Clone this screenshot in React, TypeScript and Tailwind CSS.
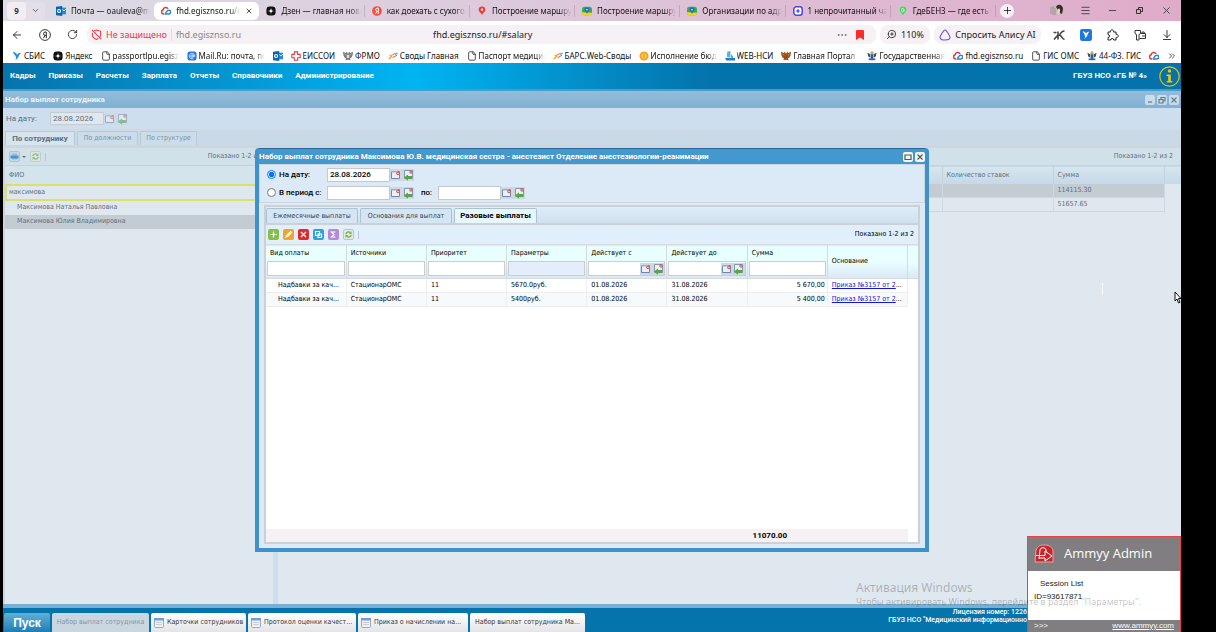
import React from 'react';
import clsx from 'clsx';
import {
  ArrowDownToLine,
  ArrowLeft,
  ChevronDown,
  ChevronsRight,
  File,
  Menu,
  Minus,
  MoreHorizontal,
  Plus,
  RotateCw,
  X,
  ZoomIn,
} from 'lucide-react';

type IconName =
  | 'outlook' | 'cloud' | 'dzen' | 'yandex' | 'pin' | 'maps' | 'chat' | 'gas'
  | 'sbis' | 'file' | 'mail' | 'cross' | 'eagle' | 'bars' | 'coin' | 'boat' | 'gerb' | 'nso';

const SiteIcon: React.FC<{ name: IconName }> = ({ name }) => {
  if (name === 'file') return <File size={10} strokeWidth={2} className="shrink-0 text-[#333]" />;
  return (
    <svg width="10" height="10" viewBox="0 0 12 12" className="shrink-0" fill="none">
      {name === 'outlook' && (
        <>
          <path d="M6 2h6v8H6z" fill="#2a8ad4" />
          <path d="M7 3.5 9.5 6 12 3.5" stroke="#fff" />
          <path d="M0 1 7.500 0v12L0 11z" fill="#0a64b4" />
          <circle cx="3.700" cy="6" r="1.800" stroke="#fff" strokeWidth="1.300" />
        </>
      )}
      {name === 'cloud' && (
        <>
          <path d="M4 9.500H3A2.500 2.500 0 0 1 2.500 4.600 3.200 3.200 0 0 1 8.500 3.500" stroke="#e23a3f" strokeWidth="1.800" />
          <path d="M4.500 9.500h5a2.200 2.200 0 0 0 0-4.400C8 5 7 6 5.500 8.500" stroke="#2b86cf" strokeWidth="1.800" />
        </>
      )}
      {name === 'dzen' && (
        <>
          <rect x="0.500" y="0.500" width="11" height="11" rx="4" fill="#111" />
          <path d="M6 2c.3 3 1 3.700 4 4-3 .3-3.700 1-4 4-.3-3-1-3.700-4-4 3-.3 3.700-1 4-4z" fill="#fff" />
        </>
      )}
      {name === 'yandex' && (
        <>
          <circle cx="6" cy="6" r="5.800" fill="#fc4a35" />
          <path d="M7.500 9.500v-7H6.300a1.900 1.900 0 0 0 0 3.900h1.200M6 6.400 4.200 9.500" stroke="#fff" strokeWidth="1.200" />
        </>
      )}
      {name === 'pin' && (
        <>
          <path d="M6 .5a4 4 0 0 1 4 4C10 7.500 6.500 8 6 11.500 5.500 8 2 7.500 2 4.500a4 4 0 0 1 4-4z" fill="#f43b2d" />
          <circle cx="6" cy="4.500" r="1.400" fill="#fff" />
        </>
      )}
      {name === 'maps' && (
        <>
          <rect y="1" width="12" height="10" rx="3" fill="#2fb344" />
          <path d="M0 7.500 12 8v1a2.500 2.500 0 0 1-2.500 2H3a3 3 0 0 1-3-2z" fill="#ffd21e" />
          <path d="M6 1.500a3 3 0 0 1 3 3C9 6.800 6.400 7 6 9.500 5.600 7 3 6.800 3 4.500a3 3 0 0 1 3-3z" fill="#2368d8" />
          <circle cx="6" cy="4.500" r="1" fill="#fff" />
        </>
      )}
      {name === 'chat' && (
        <>
          <rect x="1" y="1" width="10" height="10" rx="3" stroke="#5a3df0" strokeWidth="1.800" fill="#fff" />
          <circle cx="6" cy="6" r="2" fill="#2a6cf5" />
        </>
      )}
      {name === 'gas' && (
        <>
          <path d="M6 .5a4 4 0 0 1 4 4C10 7.500 7 8 6 11.500 5 8 2 7.500 2 4.500a4 4 0 0 1 4-4z" fill="#3ddc5b" />
          <path d="M4.500 3h2v4h-2zM7.500 4v2.500" stroke="#b8f5c3" />
        </>
      )}
      {name === 'sbis' && <path d="M1 1c2.500.3 4 1.500 5 3.500C7 3 8.500 2 11 2 9 4 8 5 7.500 7.500L4 11.500c1-2.500 1-3.500.5-5C4 5 2 4 1 1z" fill="#1d8fe8" />}
      {name === 'mail' && (
        <>
          <rect x="0.500" y="0.500" width="11" height="11" rx="3" fill="#2477f2" />
          <circle cx="6" cy="6" r="1.500" stroke="#fff" />
          <path d="M7.500 4.500v2c0 1.200 1.800 1 1.800-.5A3.300 3.300 0 1 0 7.500 9" stroke="#fff" strokeWidth="0.900" />
        </>
      )}
      {name === 'cross' && <path d="M4 1h4v3h3v4H8v3H4V8H1V4h3z" stroke="#e23a45" strokeWidth="1.300" fill="#fff" />}
      {(name === 'eagle' || name === 'gerb') && (
        <>
          <path d="M6 3.500 4.500 .5 3.500 2.500 0 1l.5 4 1.500 3 1.500.500L3 11l3-.5 3 .5-.5-2.500L10 8l1.500-3L12 1 8.500 2.500 7.500.5z" fill={name === 'gerb' ? '#8a5a16' : '#777'} />
          <path d="M4.500 4.500h3v3L6 9 4.500 7.500z" fill={name === 'gerb' ? '#d12a2a' : '#ddd'} />
          <path d="M1.500 3 4 5.500M10.500 3 8 5.500" stroke={name === 'gerb' ? '#e0b040' : '#ccc'} strokeWidth="0.900" />
        </>
      )}
      {name === 'bars' && (
        <>
          <path d="M1 9.500 5 6M2 6l2.500-1.500" stroke="#f0a020" strokeWidth="1.500" />
          <path d="M5 5l3-2M5.500 8 11 5" stroke="#e8602c" strokeWidth="1.200" />
          <path d="M8 4l3.500-1.500" stroke="#4aa3df" strokeWidth="1.500" />
        </>
      )}
      {name === 'coin' && (
        <>
          <circle cx="6" cy="6" r="5.500" fill="#f7a51c" />
          <circle cx="6" cy="6" r="3" fill="#ffd75e" />
          <path d="M6 4v4" stroke="#d98207" strokeWidth="1.300" />
        </>
      )}
      {name === 'boat' && (
        <>
          <path d="M2.500 1 6.500 0v7.500h-4z" fill="#4ab5f0" />
          <path d="M7.500 3.500 10 8H7.500z" fill="#1b7fd0" />
          <path d="M0 8.500h12v3H1.500z" fill="#1b7fd0" />
        </>
      )}
      {name === 'nso' && (
        <>
          <path d="M.5 2 4 4v4L1.500 6.500zM11.500 2 8 4v4l2.500-1.500z" fill="#3c4f6c" />
          <path d="M4.500 2h3v7L6 11.500 4.500 9z" fill="#2763b0" />
          <path d="M4.500.5h3V4h-3z" fill="#d8a83c" />
          <path d="M2 9h8v2H2z" fill="#3c5f9c" />
        </>
      )}
    </svg>
  );
};

const tabs: { icon: IconName; title: string; active?: boolean }[] = [
  { icon: 'outlook', title: 'Почта — oauleva@mail' },
  { icon: 'cloud', title: 'fhd.egisznso.ru/#salary', active: true },
  { icon: 'dzen', title: 'Дзен — главная новости' },
  { icon: 'yandex', title: 'как доехать с сухого лога' },
  { icon: 'pin', title: 'Построение маршрута' },
  { icon: 'maps', title: 'Построение маршрута' },
  { icon: 'maps', title: 'Организации по адресу' },
  { icon: 'chat', title: '1 непрочитанный чат' },
  { icon: 'gas', title: 'ГдеБЕНЗ — где есть бензин' },
];

const bookmarks: { icon: IconName; title: string }[] = [
  { icon: 'sbis', title: 'СБИС' },
  { icon: 'dzen', title: 'Яндекс' },
  { icon: 'file', title: 'passportlpu.egisznso.ru' },
  { icon: 'mail', title: 'Mail.Ru: почта, поиск' },
  { icon: 'outlook', title: '' },
  { icon: 'cross', title: 'ЕИССОИ' },
  { icon: 'eagle', title: 'ФРМО' },
  { icon: 'bars', title: 'Своды Главная' },
  { icon: 'file', title: 'Паспорт медицинской' },
  { icon: 'bars', title: 'БАРС.Web-Своды' },
  { icon: 'coin', title: 'Исполнение бюджета' },
  { icon: 'boat', title: 'WEB-НСИ' },
  { icon: 'gerb', title: 'Главная Портал Закупок' },
  { icon: 'nso', title: 'Государственная инф' },
  { icon: 'cloud', title: 'fhd.egisznso.ru' },
  { icon: 'file', title: 'ГИС ОМС' },
  { icon: 'nso', title: '44-ФЗ. ГИС' },
  { icon: 'cloud', title: '' },
];

const menu = ['Кадры', 'Приказы', 'Расчеты', 'Зарплата', 'Отчеты', 'Справочники', 'Администрирование'];

const fade = '[mask-image:linear-gradient(to_right,#000_85%,transparent)]';
const small = "font-['DejaVu_Sans_Condensed','DejaVu_Sans',sans-serif] text-[7px]";

const TabBar: React.FC = () => (
  <div className="flex h-[21px] items-center bg-linear-to-r from-[#dcdde5] via-[#ddc6da] to-[#dfabc9] pl-1">
    <div className="flex h-[18px] w-[38px] shrink-0 items-center rounded bg-[#e4dee8]">
      <button className="h-full w-[19px] rounded bg-[#f1edf3] text-[8px] font-bold text-[#333]">9</button>
      <button aria-label="Список вкладок" className="flex w-[19px] justify-center">
        <ChevronDown size={9} strokeWidth={1.5} />
      </button>
    </div>
    <div className="ml-1 flex h-full min-w-0 flex-1 items-center">
      {tabs.map((tab, i) => (
        <a
          key={i}
          href="#salary"
          className={clsx(
            'flex h-[18px] min-w-0 flex-1 items-center gap-[5px] pr-1 pl-[7px]',
            tab.active ? 'rounded-md bg-white' : i > 1 && 'bg-[linear-gradient(#0002,#0002)] bg-[length:1px_12px] bg-right bg-no-repeat'
          )}
        >
          <SiteIcon name={tab.icon} />
          <span className={clsx('min-w-0 flex-1 overflow-hidden text-[8px] whitespace-nowrap text-[#111]', fade)}>{tab.title}</span>
          {tab.active && <X size={8} strokeWidth={2} className="mr-0.5 shrink-0" />}
        </a>
      ))}
    </div>
    <button aria-label="Новая вкладка" className="ml-1 flex size-[14px] shrink-0 items-center justify-center rounded-full bg-[#f8f0f6]">
      <Plus size={11} strokeWidth={1.5} />
    </button>
    <div className="flex shrink-0 items-center justify-between pr-[9px] pl-9">
      <svg width="14" height="13" viewBox="0 0 14 13" className="mr-4">
        <circle cx="8" cy="6" r="6" fill="#c9b9b7" />
        <path d="M6 3c2-4 7-2 7 2l-1 5-2-1z" fill="#3a2c2c" />
        <path d="M8 5c2-1 2 0 2 2l-1 4-2-2z" fill="#ead2c8" />
        <path d="M1 3v7M3 2v9M5 4v7" stroke="#8a7d80" strokeWidth="0.7" />
      </svg>
      <div className="flex gap-4 text-[#333]">
        <button aria-label="Меню"><Menu size={11} strokeWidth={1.8} /></button>
        <button aria-label="Свернуть"><Minus size={11} strokeWidth={1.8} /></button>
        <button aria-label="Восстановить">
          <svg width="11" height="11" viewBox="0 0 11 11" fill="none" stroke="currentColor">
            <path d="M2.500 4.500h4v4h-4zM4.500 4.500v-2h4v4h-2" />
          </svg>
        </button>
        <button aria-label="Закрыть"><X size={11} strokeWidth={1.8} /></button>
      </div>
    </div>
  </div>
);

const AddressBar: React.FC = () => (
  <div className="flex h-[27px] items-center bg-white pr-2 pl-2 text-[9px] text-[#222]">
    <button aria-label="Назад" className="w-7"><ArrowLeft size={12} strokeWidth={1.8} /></button>
    <button aria-label="Яндекс" className="w-7">
      <svg width="12" height="12" viewBox="0 0 12 12" fill="none" stroke="#222">
        <circle cx="6" cy="6" r="5.400" strokeWidth="0.900" />
        <path d="M7.300 9.200V3H6.200a1.700 1.700 0 0 0 0 3.400h1.100M6 6.400 4.400 9.200" />
      </svg>
    </button>
    <button aria-label="Обновить" className="w-5"><RotateCw size={11} strokeWidth={1.8} /></button>
    <div className="flex h-[19px] flex-1 items-center rounded-lg bg-[#f5f1f5] pr-1 pl-1">
      <svg width="11" height="11" viewBox="0 0 12 12" fill="none" stroke="#f5343c" strokeWidth="1.1">
        <path d="M3.500 2 6 1l4.500 1.500v4c0 1-.4 1.800-1 2.500M8 10.200c-.6.500-1.300.9-2 1.300-2.500-1.200-4.500-2.700-4.500-5V4M1 1l10 10" />
      </svg>
      <span className="ml-1 text-[#f5343c]">Не защищено</span>
      <span className="mx-1 h-3 w-px bg-[#ddd]" />
      <span className="text-[#888]">fhd.egisznso.ru</span>
      <span className="flex-1 pl-48">fhd.egisznso.ru/#salary</span>
      <MoreHorizontal size={12} className="text-[#777]" />
      <svg width="8" height="10" viewBox="0 0 8 10" className="mx-2">
        <path d="M0 1a1 1 0 0 1 1-1h6a1 1 0 0 1 1 1v9L4 7.500 0 10z" fill="#ff2a2a" />
      </svg>
    </div>
    <button className="ml-1 flex h-[19px] w-[50px] items-center justify-center gap-1 rounded-lg bg-[#f5f1f5]">
      <ZoomIn size={11} strokeWidth={1.800} className="-scale-x-100" />
      110%
    </button>
    <button className="ml-1 flex h-[19px] w-[107px] items-center justify-center gap-1 rounded-lg bg-[#f5f1f5]">
      <svg width="12" height="12" viewBox="0 0 12 12" fill="none">
        <path d="M6 1c1.500 0 5 6 5 7.500C11 10.300 8.500 11 6 11S1 10.300 1 8.500C1 7 4.500 1 6 1z" stroke="#6a4df0" strokeWidth="1.1" />
      </svg>
      Спросить Алису AI
    </button>
    <div className="ml-3 flex items-center gap-[15px]">
      <svg width="12" height="12" viewBox="0 0 12 12" fill="none" stroke="#444" strokeWidth="1.600">
        <path d="M.5 3.500h3M1 10.500 5 6M5 2.500v8M11.500 2C9 2 7.500 4 6.500 6.300c2.500 0 2.500 4 5 4" />
      </svg>
      <svg width="12" height="12" viewBox="0 0 11 11">
        <rect width="11" height="11" rx="2" fill="#1e78e0" />
        <path d="M2.500 2c1.500.2 2.500 1 3 2C6 3 7 2.500 8.500 2.500 7.500 4 7 4.500 6.500 6.500L4 9.200c.8-1.500.8-2.700.3-3.700z" fill="#fff" />
      </svg>
      <svg width="12" height="12" viewBox="0 0 12 12" fill="none" stroke="#222" strokeLinejoin="round">
        <path d="M1 3h2.500a1.600 1.600 0 1 1 3 0H9v2.500a1.600 1.600 0 1 1 0 3V11H6.700a1.500 1.500 0 0 0-3 0H1V8.500a1.500 1.500 0 0 0 0-3z" />
      </svg>
      <svg width="12" height="12" viewBox="0 0 12 12" fill="none" stroke="#333">
        <path d="M1 1.500h5.500M1 1.500v3l1.500 1V11h2.500V5.500l1.500-1v-3M6.500 4.500H11.500V9.500H5.500M8 4.500V3h2.200v1.500M8 7h3.500" />
      </svg>
      <ArrowDownToLine size={12} strokeWidth={1.8} />
    </div>
  </div>
);

const BookmarksBar: React.FC = () => (
  <div className="flex h-[15px] items-center gap-2 overflow-hidden bg-white pr-[9px] pl-[9px]">
    {bookmarks.map((b, i) => (
      <a key={i} href="#bookmark" className="flex shrink-0 items-center gap-0.5 text-[8px] text-[#111]">
        <SiteIcon name={b.icon} />
        {b.title && (
          <span className={clsx('max-w-[66px] overflow-hidden whitespace-nowrap', b.title.length > 14 && b.icon !== 'cloud' && fade)}>{b.title}</span>
        )}
      </a>
    ))}
    <button aria-label="Ещё закладки" className="ml-auto"><ChevronsRight size={10} strokeWidth={1.6} /></button>
  </div>
);

const MainMenu: React.FC = () => (
  <nav className="flex h-[28px] items-center border-b-2 border-[#4c9bc8] bg-linear-to-r from-[#0873ab] via-[#00b4f2] via-35% to-[#0473ab] to-60% pr-px pl-[7px] text-[8px] font-bold text-white">
    <div className="flex gap-[13px]">
      {menu.map((item) => (
        <a key={item} href="#menu">{item}</a>
      ))}
    </div>
    <span className="ml-auto">ГБУЗ НСО «ГБ № 4»</span>
    <button aria-label="Информация" className="ml-3">
      <svg width="21" height="21" viewBox="0 0 21 21" fill="none">
        <circle cx="10.500" cy="10.500" r="9.700" stroke="#e3c11c" strokeWidth="1.200" />
        <circle cx="10.500" cy="5" r="1.700" fill="#f5c80a" />
        <path d="M7.500 8.500h4.300v6.500h1.500v1.500h-5.600V15h1.500v-5H7.500z" fill="#f5c80a" />
      </svg>
    </button>
  </nav>
);

const DateButtons: React.FC = () => (
  <div className="flex shrink-0">
    <button aria-label="Календарь" className="flex size-3 items-center justify-center bg-[#cfd8e0]">
      <svg width="10" height="10" viewBox="0 0 10 10">
        <path d="M.5 1.500h8v7h-8z" fill="#eaf0f8" stroke="#6f87ac" />
        <path d="M0 1h7v1.500H0z" fill="#8fb0dc" />
        <circle cx="7" cy="3.500" r="1.800" fill="#c8605a" />
        <circle cx="7" cy="3.500" r="0.700" fill="#fff" />
      </svg>
    </button>
    <button aria-label="Применить дату" className="flex size-3 items-center justify-center bg-[#cfd8e0]">
      <svg width="11" height="12" viewBox="0 0 11 12">
        <path d="M1.500 1.500h8v8h-8z" fill="#eaf0f8" stroke="#8496b0" />
        <circle cx="8" cy="3" r="1.700" fill="#c8605a" />
        <circle cx="8" cy="3" r="0.600" fill="#fff" />
        <path d="M1 8.500 5 5.500V7h4v3H5v1.800z" fill="#55a840" />
      </svg>
    </button>
  </div>
);

const RefreshIcon: React.FC = () => (
  <svg width="11" height="11" viewBox="0 0 11 11" fill="none">
    <rect x="0.500" y="0.500" width="10" height="10" rx="1.500" fill="#e3e9e4" stroke="#bcc4c4" />
    <path d="M2.800 5.200A2.600 2.600 0 0 1 7 3.500M8.200 5.800A2.600 2.600 0 0 1 4 7.500" stroke="#6db33f" strokeWidth="1.300" />
    <path d="M8.500 2v3H5.800zM2.500 9V6h2.700z" fill="#6db33f" />
  </svg>
);

const toolIcons = [
  { label: 'Добавить', color: 'bg-[#86bf45]', d: 'M5.5 2.500v6M2.500 5.500h6' },
  { label: 'Изменить', color: 'bg-[#efa52e]', d: 'M3 8l1-2 3.500-3.500 1 1L5 7z' },
  { label: 'Удалить', color: 'bg-[#dd2b2b]', d: 'M3 3l5 5M8 3 3 8' },
  { label: 'Копировать', color: 'bg-[#2f9fd6]', d: 'M2.500 2.500h4v4h-4zM5 5h3.500v3.500H5z' },
  { label: 'Сумма', color: 'bg-[#b48ad6]', d: 'M7.500 3H3.500L6 5.500 3.500 8h4' },
];

const WindowButton: React.FC<{ label: string; d: string }> = ({ label, d }) => (
  <button aria-label={label} className="flex size-[10px] items-center justify-center rounded-xs bg-[#f3f6f8]">
    <svg width="8" height="8" viewBox="0 0 8 8" fill="none" stroke="#555" strokeWidth="1.2">
      <path d={d} />
    </svg>
  </button>
);

const PayrollWindow: React.FC = () => (
  <section className="flex flex-1 flex-col bg-[#cddeee] text-[#5f6f7e]">
    <header className="flex h-[17px] items-center justify-between bg-linear-to-b from-[#93bdd9] to-[#81b0d2] px-0.5 text-[8px] font-bold text-[#e9f3fa]">
      Набор выплат сотрудника
      <div className="flex gap-0.5 opacity-60">
        <WindowButton label="Свернуть окно" d="M2 6h4" />
        <WindowButton label="Восстановить окно" d="M1 3.500h4V7H1zM3 3V1.500h4V5H5.500" />
        <WindowButton label="Закрыть окно" d="M1.500 1.500l5 5M6.500 1.500l-5 5" />
      </div>
    </header>
    <div className="flex h-[21px] items-center px-[3px] text-[8px]">
      <label htmlFor="main-date" className="w-11">На дату:</label>
      <input id="main-date" defaultValue="28.08.2026" className="h-[13px] w-[54px] border border-[#c6ccd2] bg-[#dfe7ef] px-0.5" />
      <div className="opacity-60"><DateButtons /></div>
    </div>
    <div className={clsx('flex h-[19px] items-end gap-0.5 border-t-2 border-b-3 border-t-[#d3d9e2] border-b-[#cfd5dc] bg-[#c9d9e8] px-0.5', small)} role="tablist">
      <button role="tab" aria-selected="true" className="h-full w-[70px] rounded-t-xs border border-b-0 border-[#b7c9d8] bg-[#d5e4ee] font-['Roboto'] text-[8px] font-bold">По сотруднику</button>
      <button role="tab" className="h-full w-[61px] rounded-t-xs border border-b-0 border-[#b7c9d8] bg-[#cbdcea] text-[#7d90a2]">По должности</button>
      <button role="tab" className="h-full w-[57px] rounded-t-xs border border-b-0 border-[#b7c9d8] bg-[#cbdcea] text-[#7d90a2]">По структуре</button>
    </div>
    <div className={clsx('flex flex-1', small)}>
      <div className="w-[270px] shrink-0 border-l-2 border-[#ccd4dc] bg-[#dfe7ef]">
        <div className="flex h-[17px] items-center gap-1 bg-[#d0e1ea] px-1">
          <button aria-label="Печать" className="flex items-center gap-0.5">
            <svg width="11" height="11" viewBox="0 0 11 11">
              <rect x="0.500" y="0.500" width="10" height="10" rx="1.500" fill="#cbd8e2" stroke="#b4c1cb" />
              <path d="M3 2.500h5v2H3zM3 7h5v1.500H3z" fill="#8fc0e4" />
              <path d="M1.500 4.500h8v3h-8z" fill="#4d95cd" />
            </svg>
            <span className="border-x-2 border-t-2 border-x-transparent border-t-[#5f6f7e]" />
          </button>
          <button aria-label="Обновить список" className="opacity-70"><RefreshIcon /></button>
          <span className="h-2 w-px bg-[#b9c6d2]" />
          <span className="mr-0.5 ml-auto">Показано 1-2 из 2</span>
        </div>
        <table className="w-full text-left">
          <thead>
            <tr className="h-[18px] border-t border-[#c5d2dc] bg-[#d4e4ec]"><th className="px-1 font-normal">ФИО</th></tr>
            <tr className="h-[17px]">
              <td className="p-0">
                <input aria-label="Фильтр по ФИО" defaultValue="максимова" className="block h-[17px] w-full border-2 border-[#dbe06a] bg-[#dfe7ef] px-0.5" />
              </td>
            </tr>
          </thead>
          <tbody>
            <tr className="h-[14px]"><td className="pl-3">Максимова Наталья Павловна</td></tr>
            <tr className="h-[14px] bg-[#c3cbd3]"><td className="pl-3">Максимова Юлия Владимировна</td></tr>
          </tbody>
        </table>
      </div>
      <div className="w-[5px] bg-[#cddeee]" />
      <div className="flex-1 bg-[#dfe7ef]">
        <div className="flex h-[17px] items-center justify-end bg-[#d0e1ea] px-2">Показано 1-2 из 2</div>
        <table className="w-full table-fixed text-left">
          <colgroup>
            <col />
            <col className="w-[111px]" />
            <col className="w-[111px]" />
            <col className="w-[17px]" />
          </colgroup>
          <thead>
            <tr className="h-[18px] border-t border-[#c5d2dc] bg-linear-to-b from-[#d6e6ec] to-[#c6d8ea]">
              <th />
              <th className="border-l border-[#c5d2dc] px-1 font-normal">Количество ставок</th>
              <th className="border-x border-[#c5d2dc] px-1 font-normal">Сумма</th>
              <th />
            </tr>
          </thead>
          <tbody>
            {['114115.30', '51657.65'].map((sum, i) => (
              <tr key={sum} className="h-[14px]">
                <td className={clsx('border-b border-[#d0d8df]', i === 0 && 'bg-[#c3cbd3]')} />
                <td className={clsx('border-b border-l border-[#d0d8df]', i === 0 && 'bg-[#c3cbd3]')} />
                <td className={clsx('border-x border-b border-[#d0d8df] px-1', i === 0 && 'bg-[#c3cbd3]')}>{sum}</td>
                <td />
              </tr>
            ))}
          </tbody>
        </table>
      </div>
    </div>
  </section>
);

const columns = ['Вид оплаты', 'Источники', 'Приоритет', 'Параметры', 'Действует с', 'Действует до', 'Сумма'];

const payments = [
  ['Надбавки за кач...', 'СтационарОМС', '11', '5670.0руб.', '01.08.2026', '31.08.2026', '5 670,00'],
  ['Надбавки за кач...', 'СтационарОМС', '11', '5400руб.', '01.08.2026', '31.08.2026', '5 400,00'],
];

const PaymentsTable: React.FC = () => (
  <table className={clsx('w-full table-fixed text-left', small)}>
    <colgroup>
      {[...columns, 'Основание'].map((c) => (
        <col key={c} className="w-[12.3%]" />
      ))}
      <col />
    </colgroup>
    <thead>
      <tr className="h-[34px] border-y border-[#d6dbe0] bg-linear-to-b from-[#e9ffff] from-50% to-[#dbe8f6]">
        {columns.map((c, i) => (
          <th key={c} className="border-r border-[#d6dbe0] px-px align-top font-normal">
            <div className="h-4 px-[3px] leading-4">{c}</div>
            <div className="flex items-center border border-[#c9ced3]">
              <input aria-label={c} disabled={i === 3} className="h-[13px] w-full min-w-0 bg-white px-0.5 disabled:bg-[#e3eefa]" />
              {(i === 4 || i === 5) && <DateButtons />}
            </div>
          </th>
        ))}
        <th className="border-r border-[#d6dbe0] px-1 font-normal">Основание</th>
        <th />
      </tr>
    </thead>
    <tbody>
      {payments.map((row, r) => (
        <tr key={r} className={clsx('h-[14px]', r === 1 && 'bg-[#f7fafd]')}>
          {row.map((cell, i) => (
            <td
              key={i}
              className={clsx(
                'truncate border-r border-b border-[#eceef0]',
                i === 0 ? 'pl-3' : i === 6 ? 'px-0.5 text-right' : 'px-1'
              )}
            >
              {cell}
            </td>
          ))}
          <td className="truncate border-r border-b border-[#eceef0] pl-1">
            <a href="#order" className="text-[#1414e6] underline">Приказ №3157 от 2</a>...
          </td>
          <td className="bg-white" />
        </tr>
      ))}
    </tbody>
  </table>
);

const PaymentsDialog: React.FC = () => (
  <div
    role="dialog"
    aria-label="Набор выплат сотрудника"
    className="absolute top-[57px] bottom-[52px] left-[252px] flex w-[674px] flex-col rounded-t border-4 border-t-0 border-[#3f92c9] bg-[#dce9f6] text-[8px] text-black"
  >
    <header className="flex h-4 shrink-0 items-center justify-between border-t border-[#256a9c] bg-[#4398cd] font-bold text-white">
      <span className="truncate">Набор выплат сотрудника Максимова Ю.В. медицинская сестра - анестезист Отделение анестезиологии-реанимации</span>
      <div className="flex gap-0.5">
        <WindowButton label="Развернуть" d="M1 2h6v4.500H1z" />
        <WindowButton label="Закрыть" d="M1.500 1.500l5 5M6.500 1.500l-5 5" />
      </div>
    </header>
    <div className="flex h-[39px] shrink-0 flex-col justify-center gap-1 border border-[#cfd6dd] px-[7px] font-medium">
      <div className="flex items-center">
        <input type="radio" id="by-date" name="mode" defaultChecked className="mr-[3px] size-[9px]" />
        <label htmlFor="by-date" className="w-12">На дату:</label>
        <input aria-label="Дата" defaultValue="28.08.2026" className="h-[14px] w-[63px] border border-[#c3c9cf] bg-white px-0.5" />
        <DateButtons />
      </div>
      <div className="flex items-center">
        <input type="radio" id="by-period" name="mode" className="mr-[3px] size-[9px]" />
        <label htmlFor="by-period" className="w-12">В период с:</label>
        <input aria-label="Начало периода" className="h-[14px] w-[63px] border border-[#c3c9cf] bg-white px-0.5" />
        <DateButtons />
        <label htmlFor="period-end" className="w-6 pl-[7px]">по:</label>
        <input id="period-end" className="h-[14px] w-[63px] border border-[#c3c9cf] bg-white px-0.5" />
        <DateButtons />
      </div>
    </div>
    <div className="mx-[5px] mt-0.5 mb-1 flex flex-1 flex-col border-2 border-[#cdd1d6] bg-white">
      <div className={clsx('flex h-[18px] shrink-0 items-end gap-0.5 border-b-2 border-[#cdd1d6] bg-linear-to-b from-[#e0edfa] to-[#cfe0ef]', small)} role="tablist">
        <button role="tab" className="h-[15px] w-[92px] rounded-t-xs border border-b-0 border-[#a9c3d6] bg-[#d5e5f3] text-[#345]">Ежемесячные выплаты</button>
        <button role="tab" className="h-[15px] w-[92px] rounded-t-xs border border-b-0 border-[#a9c3d6] bg-[#d5e5f3] text-[#345]">Основания для выплат</button>
        <button role="tab" aria-selected="true" className="h-[15px] w-[83px] rounded-t-xs border border-b-0 border-[#a9c3d6] bg-[#e8f7fc] font-['Roboto'] text-[8px] font-bold">Разовые выплаты</button>
      </div>
      <div className={clsx('flex h-[19px] shrink-0 items-center gap-1 bg-[#e1effc] px-0.5', small)}>
        {toolIcons.map((t) => (
          <button key={t.label} aria-label={t.label} className={clsx('rounded-xs', t.color)}>
            <svg width="11" height="11" viewBox="0 0 11 11" fill="none" stroke="#fff" strokeWidth="1.200">
              <path d={t.d} />
            </svg>
          </button>
        ))}
        <button aria-label="Обновить"><RefreshIcon /></button>
        <span className="h-2 w-px bg-[#b9c6d2]" />
        <span className="ml-auto pr-0.5">Показано 1-2 из 2</span>
      </div>
      <PaymentsTable />
      <div className="mt-auto mr-[10px] h-[13px] bg-[#f5f1f5] pr-[121px] text-right text-[8px] leading-[13px] font-bold">11070.00</div>
    </div>
  </div>
);

const tasks = [
  { title: 'Карточки сотрудников', width: 'w-[95px]' },
  { title: 'Протокол оценки качест...', width: 'w-[108px]' },
  { title: 'Приказ о начислении на...', width: 'w-[110px]' },
];

const Taskbar: React.FC = () => (
  <footer className="flex h-[28px] items-end border-t-4 border-[#79afd3] bg-[#0574ac] text-[7px] text-[#333]">
    <button className="mr-0.5 ml-px h-[19px] w-[46px] rounded-t-xs bg-linear-to-b from-[#5fb0d8] to-[#1b7fb5] font-['Liberation_Sans'] text-[12px] font-bold text-white">Пуск</button>
    <div className="flex gap-0.5 font-['DejaVu_Sans_Condensed','DejaVu_Sans'] whitespace-nowrap">
      <button className="h-[19px] w-[97px] rounded-t-xs bg-[#cbd7e0] text-[#8396a6]">Набор выплат сотрудника</button>
      {tasks.map((t) => (
        <button key={t.title} className={clsx('flex h-[19px] items-center gap-[3px] rounded-t-xs bg-linear-to-b from-white to-[#e4e4e8] px-[3px]', t.width)}>
          <svg width="10" height="10" viewBox="0 0 10 10" className="shrink-0">
            <rect x="0.500" y="0.500" width="9" height="9" rx="1" fill="#f2f2f2" stroke="#8fa9d4" />
            <path d="M0 0h10v2.500H0z" fill="#6f9de0" />
            <path d="M2 4.500h6M2 6.500h6" stroke="#ccc" />
          </svg>
          {t.title}
        </button>
      ))}
      <button className="h-[19px] w-[115px] rounded-t-xs bg-linear-to-b from-white to-[#e4e4e8]">Набор выплат сотрудника Ма...</button>
    </div>
    <div className="mr-[154px] ml-auto self-start text-right leading-[8px] font-medium whitespace-nowrap text-white">
      <p>Лицензия номер: 1226</p>
      <p>ГБУЗ НСО "Медицинский информационно</p>
    </div>
  </footer>
);

const AmmyyPopup: React.FC = () => (
  <aside className="absolute right-0 bottom-0 flex h-24 w-[154px] flex-col border border-b-0 border-[#f04040] bg-white font-['Liberation_Sans'] text-[8px] text-[#222]">
    <div className="flex h-[34px] items-center gap-2.5 bg-[#807e80] pl-1.5 font-['Open_Sans'] text-[13px] text-white">
      <svg width="20" height="20" viewBox="0 0 20 20">
        <path d="M1 18 2 6C4 2 6 1 10 1s7 1 9 5v12z" fill="#c8242a" stroke="#e8a5a5" />
        <path d="M5 15 6 6c0-3 6-3 6 0v2M2 11.500h9V7l7 5-7 5v-3H5" fill="none" stroke="#fff" strokeWidth="1" />
      </svg>
      Ammyy Admin
    </div>
    <p className="mt-2 pl-3 leading-[10px]">Session List</p>
    <p className="mt-[3px] pl-1.5 leading-[10px]">ID=93617871</p>
    <div className="mt-auto flex h-3 items-center justify-between bg-[#807e80] px-1.5 text-white">
      <button>&gt;&gt;&gt;</button>
      <a href="#ammyy" className="underline">www.ammyy.com</a>
    </div>
  </aside>
);

const App: React.FC = () => (
  <div className="min-h-screen bg-black pr-[35px] pl-[3px] font-['Roboto','Liberation_Sans',sans-serif]">
    <div className="relative flex min-h-screen flex-col overflow-hidden">
      <div className="font-['Noto_Sans',sans-serif]">
        <TabBar />
        <AddressBar />
        <BookmarksBar />
      </div>
      <MainMenu />
      <main className="relative flex flex-1 flex-col">
        <PayrollWindow />
        <PaymentsDialog />
      </main>
      <Taskbar />
      <AmmyyPopup />
      <div className="pointer-events-none absolute right-10 bottom-6 font-['Noto_Sans'] whitespace-nowrap text-black/25">
        <p className="text-[12px] leading-[16px]">Активация Windows</p>
        <p className="text-[9px] leading-[12px]">Чтобы активировать Windows, перейдите в раздел "Параметры".</p>
      </div>
      {/* text caret and mouse pointer */}
      <div className="absolute top-[283px] right-[78px] h-[11px] w-px bg-white" />
      <svg width="7" height="13" viewBox="0 0 7 13" className="absolute top-[291px] right-0">
        <path d="M1 1v9l2-2 1.500 4 1.500-.700L4.500 7.500H7z" fill="#fff" stroke="#111" />
      </svg>
    </div>
  </div>
);

export default App;
